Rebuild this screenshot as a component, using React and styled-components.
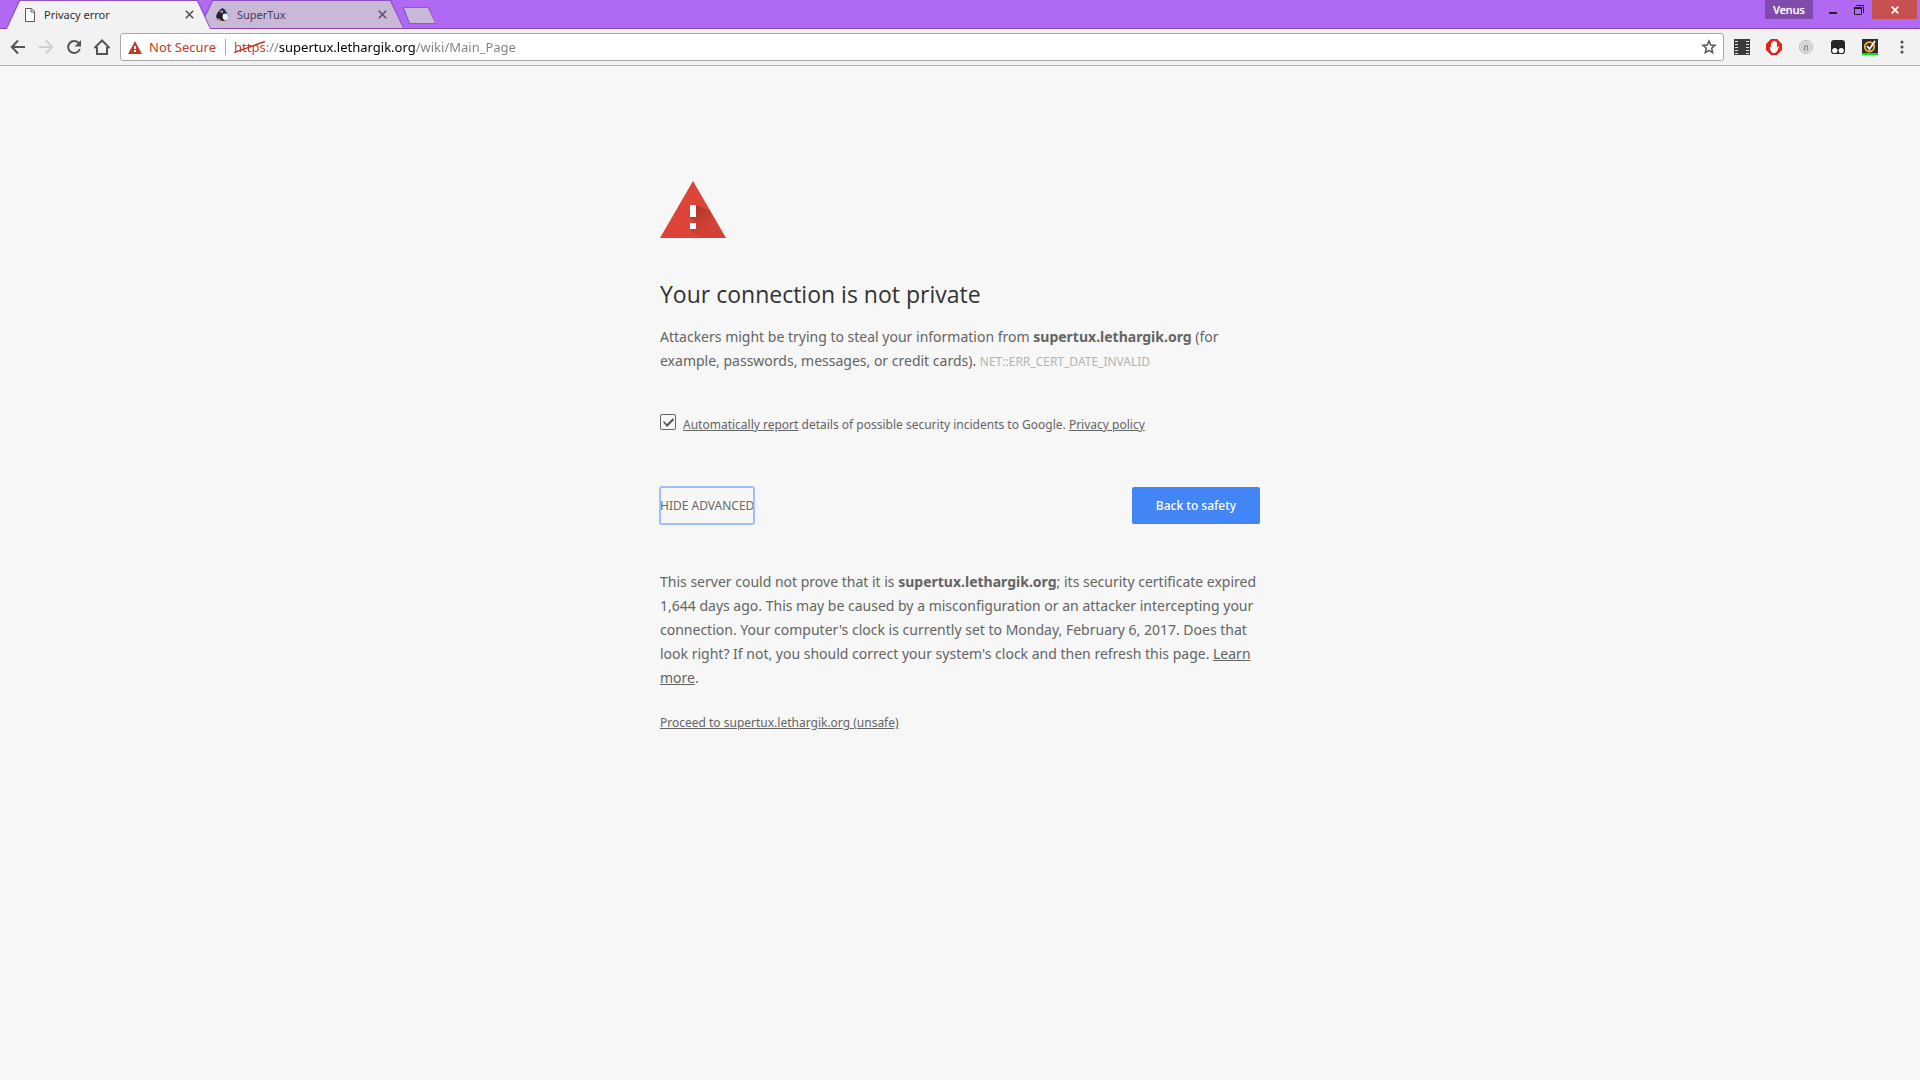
import React from "react";
import styled, { createGlobalStyle } from "styled-components";

const GlobalStyle = createGlobalStyle`
  * {
    box-sizing: border-box;
  }
  body {
    margin: 0;
    background: #f7f7f7;
    color: #646464;
    font-family: "Noto Sans", "Open Sans", sans-serif;
  }
  button {
    font-family: inherit;
    border: 0;
    padding: 0;
    background: none;
    cursor: pointer;
  }
`;

const TabStrip = styled.header`
  display: flex;
  height: 29px;
  padding: 0 3px 0 6px;
  background: #b069f2;
  border-bottom: 1px solid #8648b8;
`;

const TabList = styled.div`
  display: flex;
  align-items: flex-start;
`;

const Tab = styled.div`
  position: relative;
  isolation: isolate;
  z-index: ${props => (props.active ? 2 : 1)};
  display: flex;
  align-items: center;
  width: 205px;
  height: 29px;
  margin-right: -12px;
  padding: 0 14px 0 17px;
  color: ${props => (props.active ? "#2f2f2f" : "#4a3b58")};

  &::before,
  &::after {
    content: "";
    position: absolute;
    z-index: -1;
    inset: 0 0 ${props => (props.active ? 0 : 1)}px;
    background: #8e50c2;
    clip-path: polygon(13px 0, calc(100% - 13px) 0, 100% 100%, 0 100%);
  }
  &::after {
    inset: 1px 1px ${props => (props.active ? 0 : 1)}px;
    background: ${props => (props.active ? "#f2f2f2" : "#cab8d9")};
  }
`;

const TabTitle = styled.span`
  flex: 1;
  margin-left: 7px;
  font-size: 11px;
  line-height: 28px;
`;

const CloseTab = styled.button`
  display: flex;
  padding: 3px;
  color: inherit;
`;

const NewTab = styled.button`
  width: 34px;
  height: 17px;
  margin: 7px 0 0 10px;
  background: #9457c8;
  clip-path: polygon(0 0, 27px 0, 100% 100%, 7px 100%);

  &::before {
    content: "";
    display: block;
    height: 15px;
    margin: 0 1px;
    background: #cab8d9;
    clip-path: polygon(1px 0, 25px 0, 100% 100%, 7px 100%);
  }
`;

const WindowControls = styled.div`
  display: flex;
  align-items: flex-start;
  margin-left: auto;
`;

const Profile = styled.button`
  width: 48px;
  height: 19px;
  margin-right: 7px;
  background: #7f4aab;
  color: #fff;
  font-size: 11px;
  line-height: 18px;
  text-shadow: 0 0 1px #fff;
`;

const WindowButton = styled.button`
  display: flex;
  justify-content: center;
  align-items: center;
  width: ${props => (props.danger ? 45 : 26)}px;
  height: 19px;
  background: ${props => (props.danger ? "#c75050" : "transparent")};
`;

const Toolbar = styled.nav`
  display: flex;
  align-items: center;
  height: 37px;
  padding: 0 8px;
  background: #f2f2f2;
  border-bottom: 1px solid #b0b0b0;
`;

const ToolButton = styled.button`
  display: flex;
  justify-content: center;
  align-items: center;
  width: 28px;
  height: 28px;
  color: ${props => (props.disabled ? "#cfcfcf" : "#555")};
`;

const NavButtons = styled.div`
  display: flex;
  margin-left: -4px;
`;

const Omnibox = styled.div`
  display: flex;
  align-items: center;
  flex: 1;
  height: 28px;
  margin: 0 4px;
  padding: 0 0 0 7px;
  background: #fff;
  border: 1px solid #a9a9a9;
  border-radius: 3px;
`;

const Security = styled.button`
  display: flex;
  align-items: center;
  gap: 7px;
  height: 16px;
  padding-right: 9px;
  border-right: 1px solid #a8a8a8;
  color: #c53a29;
  font-size: 13px;
  line-height: 16px;
`;

const Address = styled.div`
  position: relative;
  flex: 1;
  margin-left: 8px;
`;

const AddressInput = styled.input`
  display: block;
  width: 100%;
  height: 24px;
  padding: 0;
  border: 0;
  outline: 0;
  font-family: inherit;
  font-size: 13px;
  color: transparent;
  caret-color: #000;
  background: linear-gradient(
    90deg,
    #c53a29 0 32px,
    #808080 32px 45px,
    #000 45px 181px,
    #808080 181px
  );
  background-clip: text;
`;

const Strike = styled.svg`
  position: absolute;
  left: 0;
  top: 5px;
  pointer-events: none;
`;

const Extensions = styled.div`
  display: flex;
  gap: 4px;
  margin-right: -4px;
`;

const Page = styled.main`
  max-width: 600px;
  margin: 0 auto;
  padding: 115px 0 40px;
  font-size: 14px;
  line-height: 24px;
`;

const Heading = styled.h1`
  margin: 40px 0 15px;
  color: #333;
  font-family: "Open Sans", "Noto Sans", sans-serif;
  font-size: 23px;
  font-weight: 400;
  line-height: 32px;
`;

const Paragraph = styled.p`
  margin: 0;
`;

const ErrorCode = styled.span`
  color: #b4b4b4;
  font-size: 12px;
`;

const Link = styled.a`
  color: inherit;
`;

const Report = styled.div`
  display: flex;
  align-items: flex-start;
  gap: 7px;
  margin-top: 40px;
  font-size: 12px;
  line-height: 22px;
`;

const Checkbox = styled.input`
  appearance: none;
  width: 16px;
  height: 16px;
  margin: 0;
  border: 1px solid #646464;
  border-radius: 2px;

  &:checked::before {
    content: "";
    display: block;
    height: 14px;
    background: #555;
    clip-path: polygon(2px 7px, 3px 6px, 6px 9px, 12px 3px, 13px 5px, 6px 12px);
  }
`;

const Actions = styled.div`
  display: flex;
  justify-content: space-between;
  margin-top: 51px;
`;

const AdvancedButton = styled.button`
  height: 37px;
  color: #696969;
  font-size: 12px;
  text-transform: uppercase;
  border-radius: 2px;
  outline: 2px solid #9fc1fb;
  outline-offset: -1px;
`;

const SafetyButton = styled.button`
  width: 128px;
  height: 37px;
  border-radius: 2px;
  background: #4285f4;
  color: #fff;
  font-size: 12px;
  font-weight: 500;
`;

const Details = styled.section`
  margin-top: 46px;
`;

const Proceed = styled.p`
  margin: 21px 0 0;
  font-size: 12px;
`;

const Cross = ({ size = 9, width = 1.6, color = "#555" }) => (
  <svg width={size} height={size} viewBox="0 0 9 9" stroke={color} strokeWidth={width}>
    <path d="M.8.8l7.400 7.400M8.200.8L.8 8.200" />
  </svg>
);

const PageIcon = () => (
  <svg width="14" height="16" viewBox="0 0 14 16" fill="#fff" stroke="#5a5a5a">
    <path d="M2.500 1.500h6l3 3v10h-9z" />
    <path d="M8 1.500v3.500h3.500" fill="none" />
  </svg>
);

const TuxIcon = () => (
  <svg width="14" height="16" viewBox="0 0 14 16">
    <path d="M8 2l3 1 1 3 2 3-3 4-4 1-1-4z" fill="#8fb4ee" />
    <path d="M4 3Q6 0 8.500 2.500L11 6.500 11.500 11 9 14H4L1 12 0 9l2-4z" fill="#252131" />
    <path d="M7 7Q11.500 5.500 12 9T9 13.500Q5.500 12 7 7z" fill="#f4f1f5" />
    <path d="M3 5l4-2v3z" fill="#aaa0b0" />
    <path d="M1 11l3 1 2 2H3zM8 13h3l-1 1z" fill="#c88b50" />
  </svg>
);

const Warning = () => (
  <svg width="14" height="13" viewBox="0 0 14 13">
    <path d="M7 0l7 13H0z" fill="#c53a29" />
    <path d="M6 5h2v3H6zM6 9h2v2H6z" fill="#fff" />
  </svg>
);

const WarningImage = styled.svg`
  display: block;
`;

const BigWarning = () => (
  <WarningImage width="66" height="57" viewBox="0 0 66 57">
    <defs>
      <linearGradient id="shade" x1="33" y1="30" x2="48" y2="45" gradientUnits="userSpaceOnUse">
        <stop offset="0" stopColor="#000" stopOpacity=".2" />
        <stop offset="1" stopColor="#000" stopOpacity=".04" />
      </linearGradient>
    </defs>
    <path d="M33 0l33 57H0z" fill="#db4437" />
    <path d="M36 24l14 6 16 27H39l-9-9 6-6-6-6z" fill="url(#shade)" />
    <path d="M30 24h6v12h-6zM30 42h6v6h-6z" fill="#fff" />
  </WarningImage>
);

const BackIcon = () => (
  <svg width="16" height="16" viewBox="0 0 16 16" fill="none" stroke="currentColor" strokeWidth="2">
    <path d="M15 8H2.500M8 1.500L1.800 8 8 14.500" />
  </svg>
);

const ForwardIcon = () => (
  <svg width="16" height="16" viewBox="0 0 16 16" fill="none" stroke="currentColor" strokeWidth="2">
    <path d="M1 8h12.500M8 1.500L14.200 8 8 14.500" />
  </svg>
);

const ReloadIcon = () => (
  <svg width="16" height="16" viewBox="0 0 16 16">
    <path d="M13 4.500A6 6 0 1 0 13.800 10" fill="none" stroke="currentColor" strokeWidth="2" />
    <path d="M15 1v6.500H8.500z" fill="currentColor" />
  </svg>
);

const HomeIcon = () => (
  <svg width="18" height="16" viewBox="0 0 18 16" fill="none" stroke="currentColor" strokeWidth="2">
    <path d="M1.500 9L9 1.500 16.500 9M4 8v7h10V8" />
  </svg>
);

const StarIcon = () => (
  <svg width="16" height="16" viewBox="0 0 16 16" fill="none" stroke="currentColor" strokeWidth="1.500">
    <path d="M8 2l1.700 4 4.300.4-3.300 2.900 1 4.300L8 11.300l-3.700 2.300 1-4.300L2 6.400 6.300 6z" />
  </svg>
);

const FilmIcon = () => (
  <svg width="16" height="16" viewBox="0 0 16 16">
    <path d="M0 0h16v16H0z" fill="#3b3b3b" />
    <path d="M1 2h3v1H1zM1 5h3v1H1zM1 8h3v1H1zM1 11h3v1H1zM1 14h3v1H1zM12 2h3v1h-3zM12 5h3v1h-3zM12 8h3v1h-3zM12 11h3v1h-3zM12 14h3v1h-3z" fill="#e4e4e4" />
  </svg>
);

const BlockIcon = () => (
  <svg width="16" height="16" viewBox="0 0 16 16">
    <path d="M5 0h6l5 5v6l-5 5H5l-5-5V5z" fill="#e5201d" />
    <path d="M5 8V4q.7-1 1.400 0V2.500q.8-1 1.500 0v-.3q.8-1 1.500 0V3q.9-.8 1.500.2V9l1-1.500q1-.8 1.300.2L11 12.500 9 14H6.500Q4 12 3.800 8z" fill="#fff" />
  </svg>
);

const KeyholeIcon = () => (
  <svg width="16" height="16" viewBox="0 0 16 16" fill="none">
    <circle cx="8" cy="8" r="6.500" fill="#e9e9e9" stroke="#b5b5b5" />
    <circle cx="8" cy="8" r="4.200" stroke="#b9b9b9" />
    <path d="M6.500 11.500V8a1.500 1.500 0 0 1 3 0v3.500" stroke="#8f8f8f" strokeWidth="1.500" />
  </svg>
);

const MonkeyIcon = () => (
  <svg width="16" height="16" viewBox="0 0 16 16">
    <path d="M4 1h8q3 0 3 3v9l-1.500 2h-11L1 13V4q0-3 3-3z" fill="#262626" />
    <circle cx="4.800" cy="11.500" r="2.600" fill="#fff" />
    <circle cx="11.200" cy="11.500" r="2.600" fill="#fff" />
  </svg>
);

const ShieldIcon = () => (
  <svg width="16" height="16" viewBox="0 0 16 16" fill="none">
    <path d="M0 0h16v14H0z" fill="#2c2c2c" />
    <path d="M0 14h16v2H0z" fill="#00e613" />
    <circle cx="7.500" cy="7.800" r="4.700" stroke="#f5b52a" strokeWidth="1.800" />
    <path d="M5 7l2.500 3L13 2" stroke="#fff" strokeWidth="1.800" />
  </svg>
);

const MenuIcon = () => (
  <svg width="16" height="16" viewBox="0 0 16 16" fill="currentColor">
    <circle cx="8" cy="3" r="1.600" />
    <circle cx="8" cy="8" r="1.600" />
    <circle cx="8" cy="13" r="1.600" />
  </svg>
);

const extensions = [
  { name: "Video", icon: <FilmIcon /> },
  { name: "Ad blocker", icon: <BlockIcon /> },
  { name: "Password", icon: <KeyholeIcon /> },
  { name: "Scripts", icon: <MonkeyIcon /> },
  { name: "Safe web", icon: <ShieldIcon /> },
  { name: "Menu", icon: <MenuIcon /> },
];

const App = () => (
  <>
    <GlobalStyle />
    <TabStrip>
      <TabList>
        <Tab active>
          <PageIcon />
          <TabTitle>Privacy error</TabTitle>
          <CloseTab aria-label="Close Privacy error"><Cross /></CloseTab>
        </Tab>
        <Tab>
          <TuxIcon />
          <TabTitle>SuperTux</TabTitle>
          <CloseTab aria-label="Close SuperTux"><Cross color="#5d4e6b" /></CloseTab>
        </Tab>
        <NewTab aria-label="New tab" />
      </TabList>
      <WindowControls>
        <Profile>Venus</Profile>
        <WindowButton aria-label="Minimize">
          <svg width="10" height="10" viewBox="0 0 10 10"><path d="M1 7h8v2H1z" fill="#222" /></svg>
        </WindowButton>
        <WindowButton aria-label="Restore">
          <svg width="10" height="10" viewBox="0 0 10 10" fill="none" stroke="#222">
            <path d="M2 .5h7.500V8M.5 3v6.500h7V3" />
            <path d="M0 3h8" strokeWidth="2" />
          </svg>
        </WindowButton>
        <WindowButton danger aria-label="Close"><Cross size={8} width={2} color="#fff" /></WindowButton>
      </WindowControls>
    </TabStrip>

    <Toolbar>
      <NavButtons>
        <ToolButton aria-label="Back"><BackIcon /></ToolButton>
        <ToolButton aria-label="Forward" disabled><ForwardIcon /></ToolButton>
        <ToolButton aria-label="Reload"><ReloadIcon /></ToolButton>
        <ToolButton aria-label="Home"><HomeIcon /></ToolButton>
      </NavButtons>
      <Omnibox>
        <Security><Warning />Not Secure</Security>
        <Address>
          <AddressInput aria-label="Address" defaultValue="https://supertux.lethargik.org/wiki/Main_Page" />
          <Strike width="32" height="14" viewBox="0 0 32 14">
            <path d="M0 12.500L31 1.500" stroke="#c53a29" strokeWidth="1.500" />
          </Strike>
        </Address>
        <ToolButton aria-label="Bookmark"><StarIcon /></ToolButton>
      </Omnibox>
      <Extensions>
        {extensions.map(({ name, icon }) => (
          <ToolButton key={name} aria-label={name}>{icon}</ToolButton>
        ))}
      </Extensions>
    </Toolbar>

    <Page>
      <BigWarning />
      <Heading>Your connection is not private</Heading>
      <Paragraph>
        Attackers might be trying to steal your information from <strong>supertux.lethargik.org</strong> (for
        example, passwords, messages, or credit cards). <ErrorCode>NET::ERR_CERT_DATE_INVALID</ErrorCode>
      </Paragraph>
      <Report>
        <Checkbox type="checkbox" id="report" defaultChecked />
        <label htmlFor="report">
          <Link href="#report">Automatically report</Link> details of possible security incidents to
          Google. <Link href="#privacy">Privacy policy</Link>
        </label>
      </Report>
      <Actions>
        <AdvancedButton>Hide advanced</AdvancedButton>
        <SafetyButton>Back to safety</SafetyButton>
      </Actions>
      <Details>
        <Paragraph>
          This server could not prove that it is <strong>supertux.lethargik.org</strong>; its security
          certificate expired 1,644 days ago. This may be caused by a misconfiguration or an attacker
          intercepting your connection. Your computer's clock is currently set to Monday, February 6,
          2017. Does that look right? If not, you should correct your system's clock and then refresh
          this page. <Link href="#learn">Learn more</Link>.
        </Paragraph>
        <Proceed>
          <Link href="#proceed">Proceed to supertux.lethargik.org (unsafe)</Link>
        </Proceed>
      </Details>
    </Page>
  </>
);

export default App;
